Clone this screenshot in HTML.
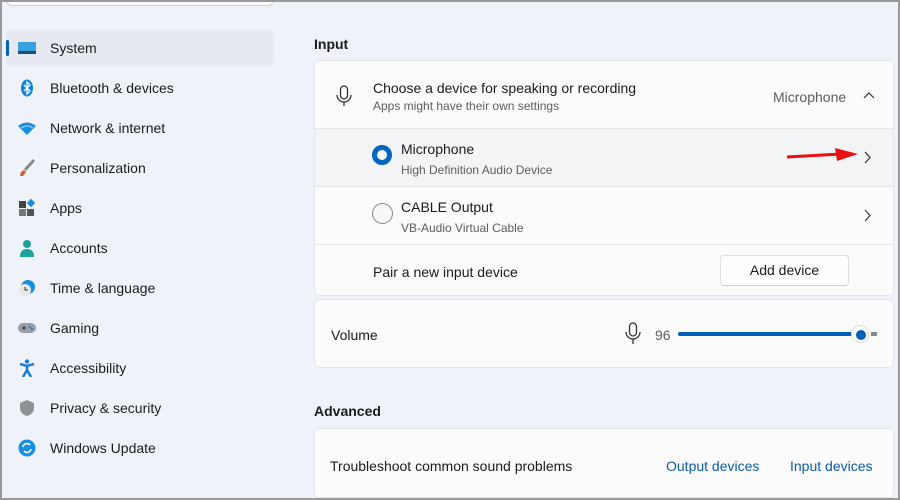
<!DOCTYPE html>
<html style="width:900px;height:500px;overflow:hidden"><head><meta charset="utf-8"><style>
*{margin:0;padding:0;box-sizing:border-box}
body{width:900px;height:500px;background:#eff3f9;font-family:"Liberation Sans",sans-serif;color:#1b1b1b;position:relative;overflow:hidden;font-size:14px}
.frame{position:absolute;left:0;top:0;width:900px;height:500px;border:2px solid #9a9a9a;pointer-events:none;z-index:10}
.search{position:absolute;left:7px;top:-10px;width:266px;height:16px;border:1px solid #d0d0d0;border-radius:4px;background:#fbfbfb}
.nav{position:absolute;left:6px;width:268px;height:36px;border-radius:5px}
.nav.sel{background:#e6e9ef}
.bar{position:absolute;left:6px;top:40px;width:3px;height:16px;border-radius:2px;background:#005fb8}
.lbl{position:absolute;left:50px;font-size:14px;color:#1b1b1b}
.ic{position:absolute;left:18px;width:18px;height:18px}
.card{position:absolute;left:314px;width:580px;background:#fbfbfc;border:1px solid #e3e5e8;border-radius:5px}
.row{position:absolute;left:0;right:0;border-top:1px solid #e5e6e8}
.t{position:absolute;font-size:14px}
.s{position:absolute;font-size:12px;color:#5d5d5d}
.h{position:absolute;left:314px;font-size:14px;font-weight:bold}
.link{position:absolute;color:#0b5cad;font-size:14px}
</style></head><body>
<div class="search"></div>
<div class="nav sel" style="top:30px"></div><div class="bar"></div>
<svg class="ic" style="top:39px" viewBox="0 0 18 18"><rect x="0" y="3" width="18" height="12" rx="1" fill="#3aa0dc"/><rect x="0" y="12" width="18" height="3" fill="#1e4f7a"/></svg>
<div class="lbl" style="top:40px">System</div>
<svg class="ic" style="top:79px" viewBox="0 0 18 18"><ellipse cx="9" cy="9" rx="6" ry="8.5" fill="#0a84e0"/><path d="M6 6l6 6-3 3V3l3 3-6 6" stroke="#fff" stroke-width="1.3" fill="none"/></svg>
<div class="lbl" style="top:80px">Bluetooth &amp; devices</div>
<svg class="ic" style="top:119px" viewBox="0 0 18 18"><path d="M0 7Q9 0 18 7L9 16Z" fill="#1a8fe0"/><path d="M3 9Q9 5 15 9" stroke="#7cc8f5" stroke-width="1.5" fill="none"/></svg>
<div class="lbl" style="top:120px">Network &amp; internet</div>
<svg class="ic" style="top:159px" viewBox="0 0 18 18"><path d="M16 1L7 11" stroke="#8a8a8a" stroke-width="3"/><path d="M3 13l3-2 2 2-3 4-3 0z" fill="#e0561f"/></svg>
<div class="lbl" style="top:160px">Personalization</div>
<svg class="ic" style="top:199px" viewBox="0 0 18 18"><rect x="1" y="2" width="7" height="7" fill="#444"/><rect x="1" y="10" width="7" height="7" fill="#777"/><rect x="9" y="10" width="7" height="7" fill="#555"/><rect x="10" y="1" width="6" height="6" fill="#1a8fe0" transform="rotate(45 13 4)"/></svg>
<div class="lbl" style="top:200px">Apps</div>
<svg class="ic" style="top:239px" viewBox="0 0 18 18"><circle cx="9" cy="5" r="4" fill="#1ba39c"/><path d="M2 18Q2 10 9 10Q16 10 16 18Z" fill="#1ba39c"/></svg>
<div class="lbl" style="top:240px">Accounts</div>
<svg class="ic" style="top:279px" viewBox="0 0 18 18"><circle cx="10" cy="8" r="7" fill="#1a8fe0"/><circle cx="7" cy="11" r="6" fill="#e8e8e8"/><path d="M7 8v3h3" stroke="#333" stroke-width="1" fill="none"/></svg>
<div class="lbl" style="top:280px">Time &amp; language</div>
<svg class="ic" style="top:319px" viewBox="0 0 18 18"><rect x="0" y="4" width="18" height="10" rx="5" fill="#9aa0a6"/><path d="M4 9h4M6 7v4" stroke="#333"/><circle cx="12" cy="8" r="1" fill="#1a6fd0"/><circle cx="14" cy="10" r="1" fill="#1a6fd0"/></svg>
<div class="lbl" style="top:320px">Gaming</div>
<svg class="ic" style="top:359px" viewBox="0 0 18 18"><circle cx="9" cy="2.5" r="2.2" fill="#1a7fd0"/><path d="M2 5l7 2 7-2M9 7v4l-4 7M9 11l4 7" stroke="#1a7fd0" stroke-width="2.5" fill="none"/></svg>
<div class="lbl" style="top:360px">Accessibility</div>
<svg class="ic" style="top:399px" viewBox="0 0 18 18"><path d="M9 1L2 4v5c0 4 3 7 7 8 4-1 7-4 7-8V4z" fill="#8e9296"/></svg>
<div class="lbl" style="top:400px">Privacy &amp; security</div>
<svg class="ic" style="top:439px" viewBox="0 0 18 18"><circle cx="9" cy="9" r="8.5" fill="#1a8fe0"/><path d="M5 8a4 4 0 0 1 7-2M13 10a4 4 0 0 1-7 2" stroke="#fff" stroke-width="1.5" fill="none"/></svg>
<div class="lbl" style="top:440px">Windows Update</div>

<div class="h" style="top:36px">Input</div>
<div class="card" style="top:60px;height:236px">
  <svg style="position:absolute;left:20px;top:24px" width="18" height="22" viewBox="0 0 18 22"><rect x="5.5" y="1" width="7" height="13" rx="3.5" stroke="#333" stroke-width="1.3" fill="none"/><path d="M2 10a7 7 0 0 0 14 0M9 17v4" stroke="#333" stroke-width="1.3" fill="none"/></svg>
  <div class="t" style="left:58px;top:19px">Choose a device for speaking or recording</div>
  <div class="s" style="left:58px;top:38px">Apps might have their own settings</div>
  <div class="t" style="left:458px;top:28px;color:#5d5d5d">Microphone</div>
  <svg style="position:absolute;left:548px;top:30px" width="12" height="10"><path d="M1 7l5-5 5 5" stroke="#333" stroke-width="1.2" fill="none"/></svg>
  <div class="row" style="top:67px;height:58px;background:#f3f4f6">
    <div style="position:absolute;left:57px;top:16px;width:20px;height:20px;border-radius:50%;border:5px solid #0067c0;background:#fff"></div>
    <div class="t" style="left:86px;top:12px">Microphone</div>
    <div class="s" style="left:86px;top:34px">High Definition Audio Device</div>
    <svg style="position:absolute;left:470px;top:18px" width="75" height="16"><path d="M2 10L56 7" stroke="#e81010" stroke-width="3"/><path d="M50 1L73 7 52 14Z" fill="#e81010"/></svg>
    <svg style="position:absolute;left:548px;top:22px" width="10" height="14"><path d="M2 1l5 5.5-5 5.5" stroke="#333" stroke-width="1.2" fill="none"/></svg>
  </div>
  <div class="row" style="top:125px;height:58px">
    <div style="position:absolute;left:57px;top:16px;width:21px;height:21px;border-radius:50%;border:1px solid #888;background:#f7f7f7"></div>
    <div class="t" style="left:86px;top:12px">CABLE Output</div>
    <div class="s" style="left:86px;top:34px">VB-Audio Virtual Cable</div>
    <svg style="position:absolute;left:548px;top:22px" width="10" height="14"><path d="M2 1l5 5.5-5 5.5" stroke="#333" stroke-width="1.2" fill="none"/></svg>
  </div>
  <div class="row" style="top:183px;height:52px">
    <div class="t" style="left:58px;top:19px">Pair a new input device</div>
    <div style="position:absolute;left:405px;top:10px;width:129px;height:31px;border:1px solid #e0e0e0;border-bottom-color:#ccc;border-radius:4px;background:#fefefe;font-size:14px;text-align:center;line-height:29px">Add device</div>
  </div>
</div>
<div class="card" style="top:299px;height:69px">
  <div class="t" style="left:16px;top:27px">Volume</div>
  <svg style="position:absolute;left:310px;top:22px" width="16" height="24" viewBox="0 0 16 24"><rect x="4.5" y="1" width="7" height="13" rx="3.5" stroke="#333" stroke-width="1.3" fill="none"/><path d="M1 10a7 7 0 0 0 14 0M8 17v5" stroke="#333" stroke-width="1.3" fill="none"/></svg>
  <div class="t" style="left:340px;top:27px;color:#5d5d5d">96</div>
  <div style="position:absolute;left:363px;top:32px;width:182px;height:4px;border-radius:2px;background:#005fb8"></div>
  <div style="position:absolute;left:556px;top:32px;width:6px;height:4px;background:#888"></div>
  <div style="position:absolute;left:536px;top:25px;width:18px;height:18px;border-radius:50%;background:#fff;border:1px solid #ddd"></div>
  <div style="position:absolute;left:541px;top:30px;width:10px;height:10px;border-radius:50%;background:#005fb8"></div>
</div>
<div class="h" style="top:403px">Advanced</div>
<div class="card" style="top:428px;height:70px">
  <div class="t" style="left:15px;top:29px">Troubleshoot common sound problems</div>
  <div class="link" style="left:351px;top:29px">Output devices</div>
  <div class="link" style="left:475px;top:29px">Input devices</div>
</div>
<div class="frame"></div>
</body></html>
